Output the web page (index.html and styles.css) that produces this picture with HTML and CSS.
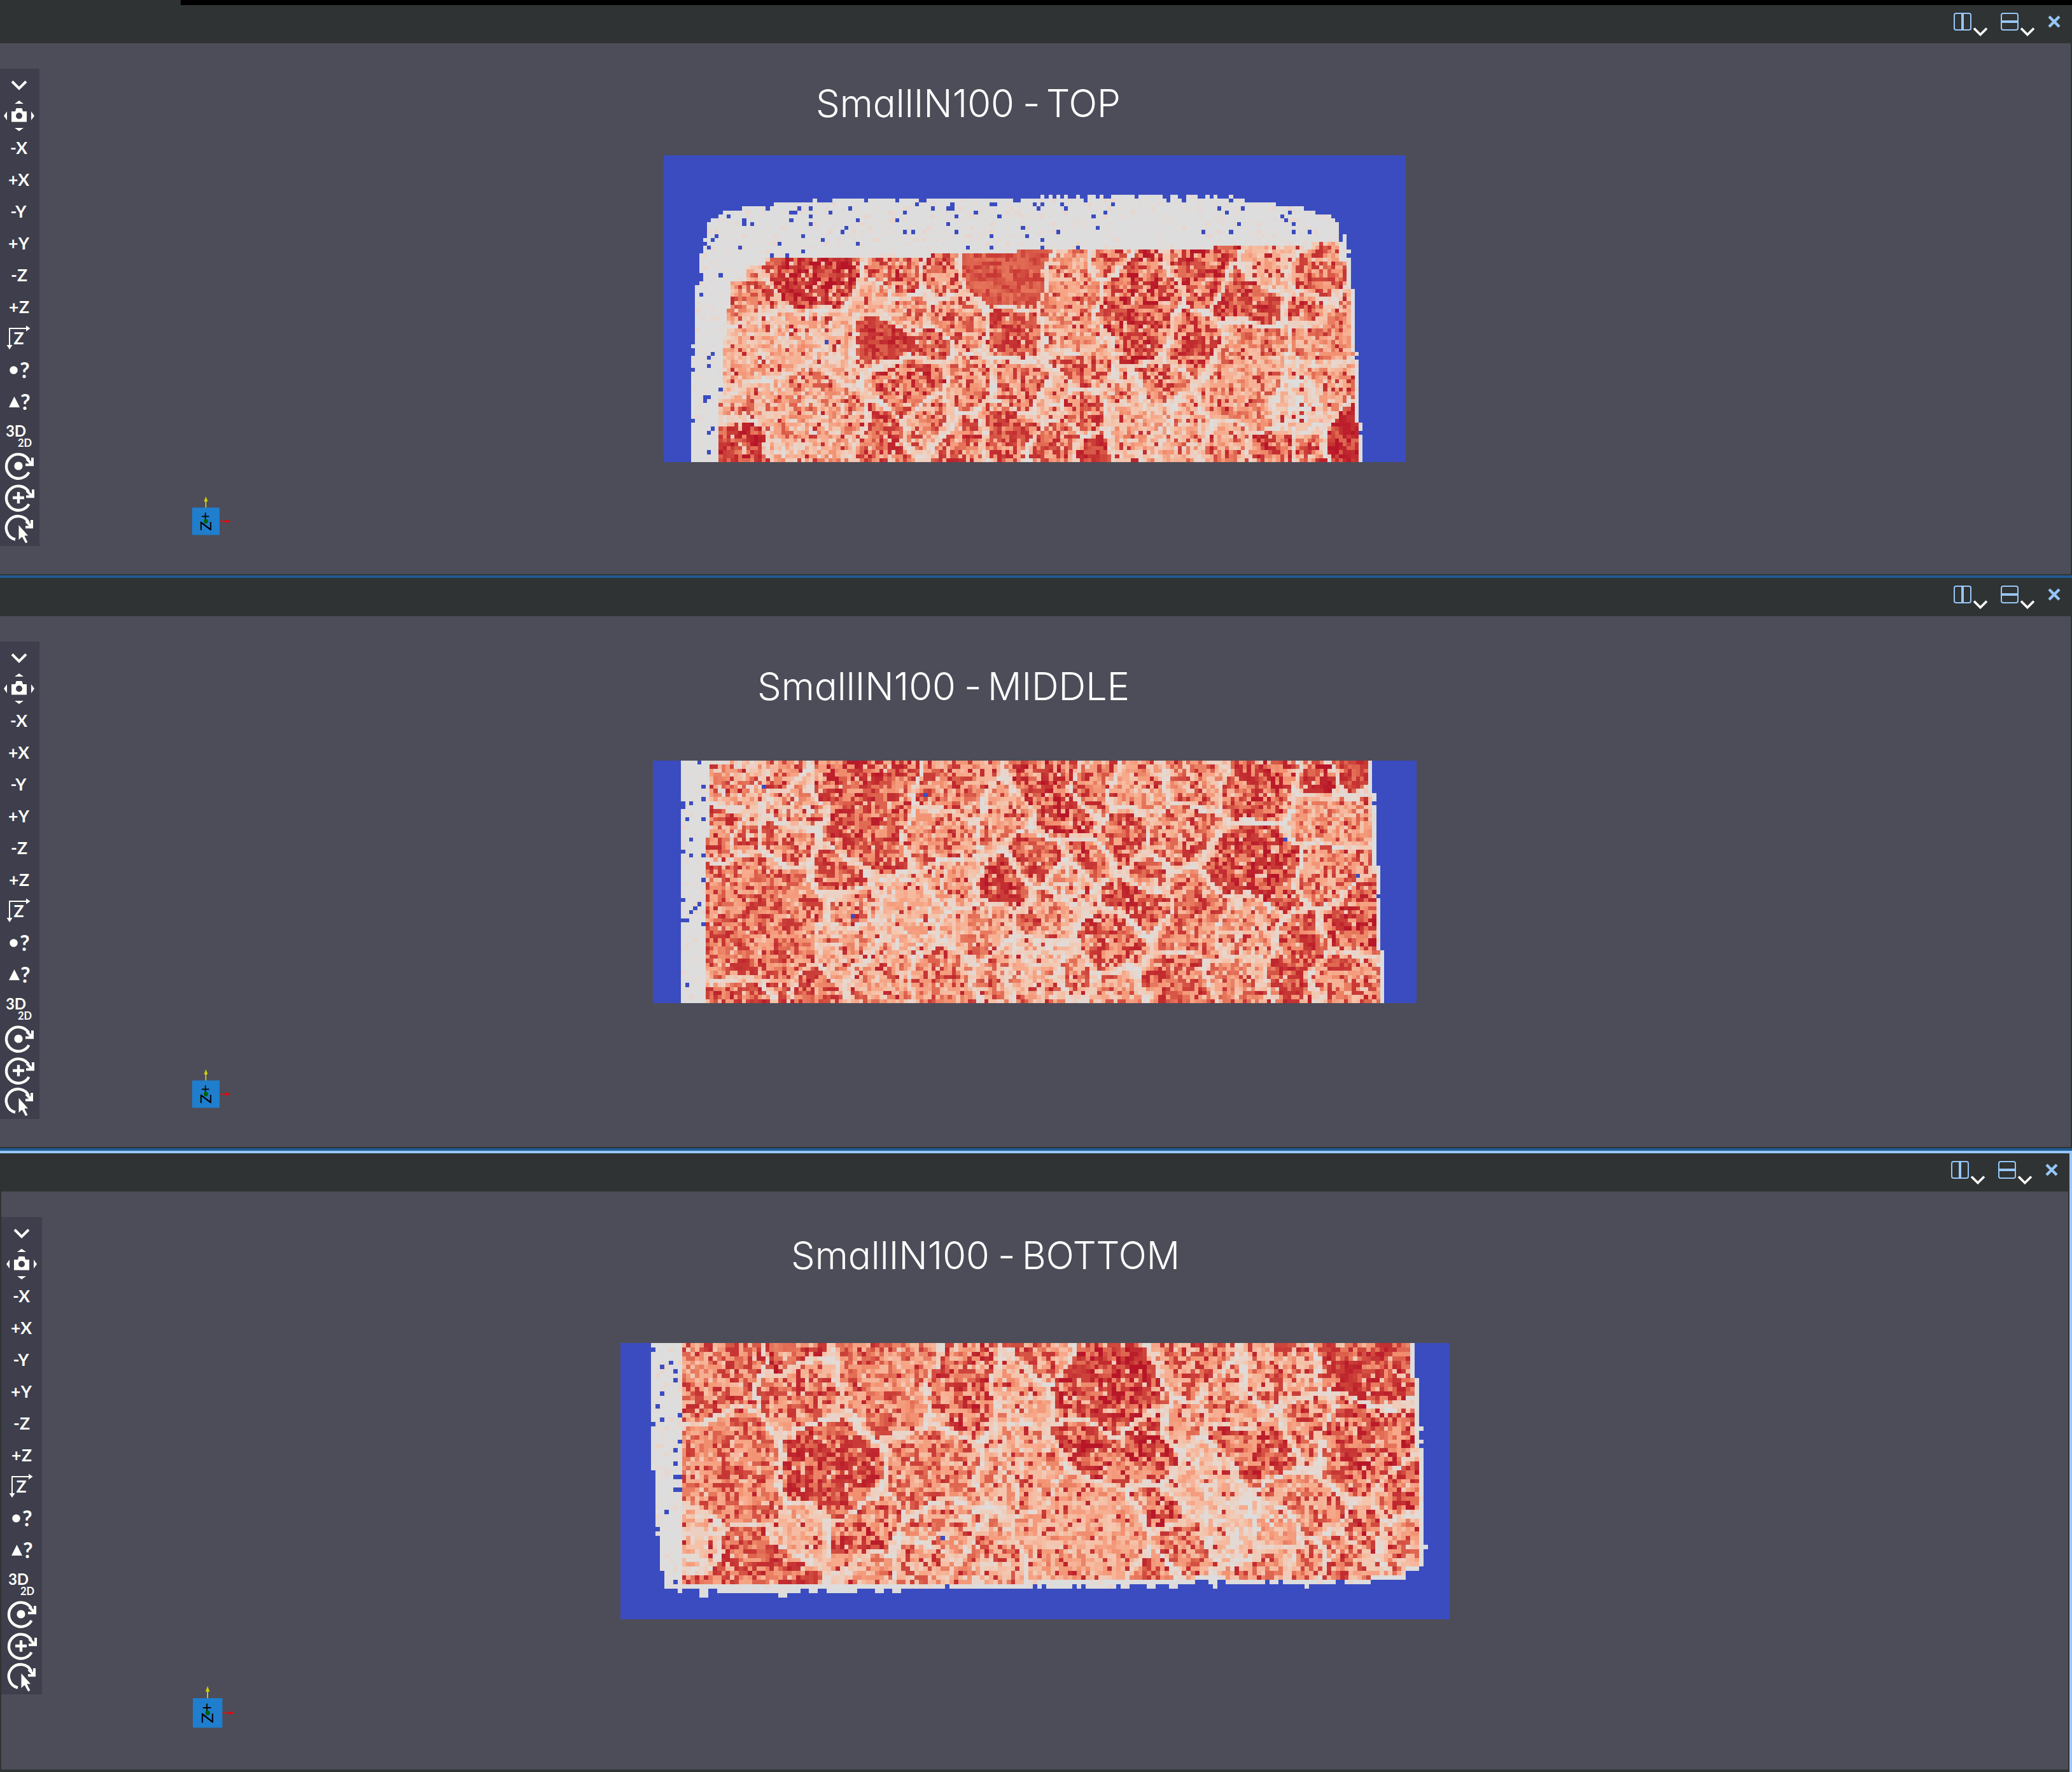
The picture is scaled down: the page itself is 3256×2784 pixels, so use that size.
FILE: index.html
```html
<!DOCTYPE html>
<html lang="en">
<head>
<meta charset="utf-8">
<title>SmallIN100</title>
<link rel="stylesheet" href="styles.css">
</head>
<body>
<svg class="defs" width="0" height="0">
  <defs>
    <g id="chev"><path d="M1 1 11 11 21 1" fill="none" stroke="#fffffa" stroke-width="3.6"/></g>
    <g id="tools" fill="#fffffa">
      <path d="M19 20 30 31 41 20" fill="none" stroke="#fffffa" stroke-width="4"/>
      <path d="M18 67h6l1.500-5h9l1.500 5h6v16.500H18z"/>
      <circle cx="30" cy="74" r="5" fill="#3e3e4c"/>
      <path d="M23 55h14l-7-5zM23 93h14l-7 5zM11 67v14l-5-7zM49 67v14l5-7z"/>
      <g class="tool-text">
        <text x="16" y="133.500" textLength="27">-X</text>
        <text x="13" y="183.500" textLength="33">+X</text>
        <text x="16.500" y="233.500" textLength="25">-Y</text>
        <text x="13" y="283.500" textLength="33">+Y</text>
        <text x="17" y="333.500" textLength="26">-Z</text>
        <text x="14" y="383.500" textLength="32">+Z</text>
        <text x="21.500" y="433">Z</text>
        <text x="31" y="486" class="q">?</text>
        <text x="32" y="536" class="q">?</text>
        <text x="9" y="578" class="d3" textLength="32">3D</text>
        <text x="28" y="594" class="d2" textLength="22">2D</text>
      </g>
      <path d="M14 407h27v-3.500l6.500 4.500-6.500 4.500v-3.500H16v25h3.500l-4.500 7-4.500-7H14z"/>
      <circle cx="21.500" cy="473.500" r="6.300"/>
      <path d="M22.500 515l8.500 17H14z"/>
      <g fill="none" stroke="#fffffa" stroke-width="4.400">
        <path d="M45.500 634a19 19 0 1 1-.500-19.500"/>
        <path d="M45.500 684a19 19 0 1 1-.500-19.500"/>
        <path d="M24 739.500a18.500 18.500 0 1 1 21-26"/>
        <path d="M40 622.200h11V611M41 672.200h11V661M40 720.200h10V709" stroke-width="4"/>
        <path d="M42 613l8 8M42 663l8 8M41 711l8 8" stroke-width="4"/>
        <path d="M29 665v18M20 674h18"/>
      </g>
      <circle cx="29" cy="624" r="6.600"/>
      <path d="M29 716v25l5.500-5 5.500 10 4-2-5-10h6z" stroke="#3e3e4c" stroke-width="1"/>
    </g>
    <g id="triad">
      <path d="M21.500 9v10" stroke="#ffff20" stroke-width="1.200"/>
      <path d="M21.500 1l3 8h-6z" fill="#d2d200"/>
      <rect x="0" y="18.500" width="43" height="43" fill="#1f7ecd"/>
      <text x="0" y="0" transform="translate(13 25) rotate(90)" textLength="30" lengthAdjust="spacingAndGlyphs">+Z</text>
      <circle cx="21.500" cy="40" r="3.400" fill="#006400"/>
      <path d="M43 40h10" stroke="#f00" stroke-width="1.200"/>
      <path d="M60.500 40l-8 2.800v-5.600z" fill="#e00"/>
    </g>
    <g id="split-v"><rect x="1" y="21" width="26" height="26" rx="3"/><path d="M14 21v26" stroke-width="4"/></g>
    <g id="split-h"><rect x="1" y="21" width="26" height="26" rx="3"/><path d="M1 34h26" stroke-width="4"/></g>
  </defs>
</svg>

<div class="top-strip"></div>

<section class="panel">
  <header class="bar">
    <svg class="split" viewBox="0 8 54 60"><use href="#split-v"/><use href="#chev" x="31" y="43.500"/></svg>
    <svg class="split" viewBox="0 8 54 60"><use href="#split-h"/><use href="#chev" x="31" y="43.500"/></svg>
    <svg class="close" viewBox="0 0 20 20"><path d="M2 2l16 16M18 2 2 18"/></svg>
  </header>
  <div class="view">
    <svg class="tools" viewBox="-2 0 64 750"><use href="#tools"/></svg>
    <div class="scene top">
      <svg class="title" width="474" height="62"><text y="53"><tspan x="-3" textLength="312" lengthAdjust="spacingAndGlyphs">SmallIN100</tspan> <tspan x="322">-</tspan> <tspan x="359" textLength="117" lengthAdjust="spacingAndGlyphs">TOP</tspan></text></svg>
      <canvas class="map" id="map-top" width="189" height="78"></canvas>
    </div>
    <svg class="triad" viewBox="0 0 62 62"><use href="#triad"/></svg>
  </div>
</section>

<section class="panel">
  <header class="bar">
    <svg class="split" viewBox="0 8 54 60"><use href="#split-v"/><use href="#chev" x="31" y="43.500"/></svg>
    <svg class="split" viewBox="0 8 54 60"><use href="#split-h"/><use href="#chev" x="31" y="43.500"/></svg>
    <svg class="close" viewBox="0 0 20 20"><path d="M2 2l16 16M18 2 2 18"/></svg>
  </header>
  <div class="view">
    <svg class="tools" viewBox="-2 0 64 750"><use href="#tools"/></svg>
    <div class="scene middle">
      <svg class="title" width="578" height="62"><text y="53"><tspan x="-3" textLength="312" lengthAdjust="spacingAndGlyphs">SmallIN100</tspan> <tspan x="322">-</tspan> <tspan x="359" textLength="223" lengthAdjust="spacingAndGlyphs">MIDDLE</tspan></text></svg>
      <canvas class="map" id="map-middle" width="189" height="60"></canvas>
    </div>
    <svg class="triad" viewBox="0 0 62 62"><use href="#triad"/></svg>
  </div>
</section>

<section class="panel active">
  <header class="bar">
    <svg class="split" viewBox="0 8 54 60"><use href="#split-v"/><use href="#chev" x="31" y="43.500"/></svg>
    <svg class="split" viewBox="0 8 54 60"><use href="#split-h"/><use href="#chev" x="31" y="43.500"/></svg>
    <svg class="close" viewBox="0 0 20 20"><path d="M2 2l16 16M18 2 2 18"/></svg>
  </header>
  <div class="view">
    <svg class="tools" viewBox="-2 0 64 750"><use href="#tools"/></svg>
    <div class="scene bottom">
      <svg class="title" width="604" height="62"><text y="53"><tspan x="-3" textLength="312" lengthAdjust="spacingAndGlyphs">SmallIN100</tspan> <tspan x="322">-</tspan> <tspan x="360" textLength="248" lengthAdjust="spacingAndGlyphs">BOTTOM</tspan></text></svg>
      <canvas class="map" id="map-bottom" width="189" height="63"></canvas>
    </div>
    <svg class="triad" viewBox="0 0 62 62"><use href="#triad"/></svg>
  </div>
</section>
<script src="maps.js"></script>
</body>
</html>
```
FILE: styles.css
```css
* { box-sizing: border-box; }
body {
  margin: 0;
  width: 3256px;
  height: 2784px;
  overflow: hidden;
  display: flex;
  flex-direction: column;
  background: #2f3333;
  font-family: Lato, "Open Sans", sans-serif;
}
.defs { position: absolute; }
.top-strip { flex: none; height: 8px; margin-left: 284px; background: #000; }
.panel {
  flex: none;
  display: flex;
  flex-direction: column;
  border-bottom: 4px solid #1f5b94;
}
.bar {
  height: 60px;
  display: flex;
  justify-content: flex-end;
  align-items: flex-start;
  gap: 20px;
  padding-right: 18px;
}
.split { width: 54px; height: 60px; fill: none; stroke: #97c7f9; stroke-width: 2; }
.close { width: 20px; height: 20px; margin-top: 16px; fill: none; stroke: #97c7f9; stroke-width: 4.4; }
.view {
  position: relative;
  height: 834px;
  margin: 0 2px 2px 0;
  display: flex;
  align-items: flex-start;
  background: #4d4d59;
}
.tools { flex: none; width: 64px; height: 750px; margin: 40px 0 0 -2px; background: #3e3e4c; }
.tool-text { font: 700 26.500px Lato, sans-serif; }
.tool-text .q { font-size: 34px; }
.tool-text .d3 { font-size: 24px; }
.tool-text .d2 { font-size: 16.500px; }
.scene { display: flex; flex-direction: column; align-items: flex-start; }
.title {
  display: block;
  overflow: visible;
  fill: #fff;
  font: 350 61px Inter, "Open Sans", sans-serif;
  font-feature-settings: "cv11";
}
.map { display: block; image-rendering: pixelated; }
.top .title { margin: 63px 0 0 1223px; }
.top .map { margin: 51px 0 0 981px; width: 1166px; height: 481.500px; }
.middle .title { margin: 79px 0 0 1131px; }
.middle .map { margin: 85.500px 0 0 964px; width: 1200px; height: 381px; }
.bottom .title { margin: 69px 0 0 1180px; }
.bottom .map { margin: 106.500px 0 0 908.500px; width: 1303.500px; height: 434.500px; }
.triad { position: absolute; left: 302px; top: 710.500px; width: 62px; height: 62px; font: 400 24px Lato, sans-serif; }
.active { flex: 1; border-top: 4px solid #97c7f9; border-right: 4px solid #97c7f9; border-bottom: 0; }
.active .view { flex: 1; margin: 0 2px 4px 2px; }
.active .tools { margin-left: 0; }
.active .triad { left: 301px; top: 776px; width: 67px; height: 67px; }
```
FILE: maps.js
```js
// Orientation slices: each is a grid of cells coloured on a cool-to-warm scale.
const STOPS = [
  [0.5, 221, 221, 221], [0.56, 233, 213, 203], [0.62, 244, 197, 173],
  [0.7, 247, 170, 140], [0.78, 242, 146, 114], [0.84, 226, 108, 84],
  [0.9, 205, 66, 58], [0.96, 192, 40, 46], [1, 184, 22, 40]
];
function warm(t) {
  t = Math.max(0.5, Math.min(1, t));
  let i = 1;
  while (t > STOPS[i][0]) i++;
  const a = STOPS[i - 1], b = STOPS[i], k = (t - a[0]) / (b[0] - a[0]);
  return [1, 2, 3].map(n => Math.round(a[n] + (b[n] - a[n]) * k));
}
function generator(seed) {
  return () => {
    seed = (seed + 0x6d2b79f5) | 0;
    let t = Math.imul(seed ^ (seed >>> 15), 1 | seed);
    t = (t + Math.imul(t ^ (t >>> 7), 61 | t)) ^ t;
    return ((t ^ (t >>> 14)) >>> 0) / 4294967296;
  };
}
// value of a step list [[from, value], ...] at position p
function step(list, p) {
  let v = list[0][1];
  for (const s of list) if (p >= s[0]) v = s[1];
  return v;
}

const MAPS = [
  {
    id: "map-top", seed: 11,
    left: [[0, 11], [21, 10], [25, 9], [33, 8], [48, 7]],
    right: [[0, 172], [20, 174], [24, 175], [34, 176], [50, 177], [68, 178]],
    top: [[0, 17], [12, 16], [14, 15], [15, 14], [20, 13], [28, 12], [43, 11], [148, 12], [156, 13], [163, 14], [166, 15], [170, 16], [171, 17], [172, 20], [173, 20], [174, 24], [175, 34], [176, 50], [177, 68]],
    bottom: [[0, 78]],
    innerLeft: [[0, 17], [39, 16], [45, 15], [60, 14]],
    innerTop: [[0, 32], [21, 28], [26, 26], [68, 25], [90, 24], [140, 23], [165, 22], [172, 27]],
    add: "38,11 96,10 98,10 100,10 102,10 105,10 108,10 109,10 111,10 114,10 115,10 116,10 117,10 118,10 119,10 121,10 122,10 123,10 124,10 125,10 126,10 129,10 130,10 133,10 134,10 135,10 138,10 140,10 144,10",
    holes: "16,15 20,16 20,17 22,17 26,13 32,14 33,14 34,13 37,13 37,15 37,17 32,16 42,14 47,13 49,16 46,18 45,19 35,20 40,21 29,22 35,24 19,23 27,25 31,25 49,22 51,11 59,11 65,11 66,11 61,14 59,16 64,12 68,13 72,13 73,13 73,12 61,19 63,19 74,15 72,17 74,19 79,14 83,12 84,12 85,15 89,11 90,11 91,18 92,20 83,20 83,23 77,23 94,12 95,13 13,20 12,21 10,22 11,23 14,30 9,30 9,31 9,35 12,50 11,51 11,53 7,49 7,50 7,54 14,59 10,61 11,61 10,62 7,67 12,69 11,70 11,75 41,47 96,12 101,12 102,13 114,12 112,14 109,15 110,18 100,19 96,21 96,23 105,23 107,11 128,11 132,11 141,13 143,14 144,11 147,13 146,17 137,19 144,19 157,15 158,16 159,14 160,17 160,19 164,19 174,25 176,51 177,70 172,20 172,21",
    // column, row, level, spread, size, and a shared id for grains built from several cells
    grains: [[31,28,.92,.2,.8,1],[41,30,.92,.2,1.1,1],[21,38,.8,.25],[30,48,.68,.22,1.1,2],[23,46,.69,.2,1,2],[42,47,.67,.2,1,2],[34,62,.73,.28,1.2,3],[44,69,.72,.28,1,3],[22,75,.92,.18,.7],[34,76,.68,.25,.9,3],[60,30,.86,.25],[70,31,.84,.25],[52,37,.73,.2,.8],[62,38,.76,.28],[85,29,.88,.08,1.45],[52,45,.92,.12,.8,4],[58,47,.92,.12,.9,4],[67,48,.9,.16,.8,4],[74,41,.81,.28],[89,45,.88,.16],[63,58,.86,.25,1.1],[89,58,.82,.26],[78,57,.8,.28],[56,72,.87,.2,1.1],[67,68,.8,.28],[87,69,.84,.24,1.1],[74,73,.82,.28],[103,34,.76,.24,1,5],[103,45,.74,.22,.9,5],[121,34,.88,.26,1.2,6],[121,44,.88,.26,1.2,6],[114,27,.86,.25,.7],[136,29,.88,.22],[135,47,.84,.28],[149,36,.9,.18],[164,31,.82,.24,.7],[163,38,.87,.24,.7],[154,27,.66,.16,.9],[168,47,.76,.2],[147,52,.77,.22,1.3,7],[149,61,.77,.22,1.2,7],[107,53,.8,.25],[118,59,.74,.28,.8],[124,57,.82,.28,.8],[107,64,.84,.25,.8],[98,62,.65,.2,.7],[100,73,.82,.25,.9],[108,76,.93,.12,.8],[121,70,.69,.24,1.2],[160,64,.6,.18],[170,58,.72,.25],[176,72,.94,.14,1.1],[155,75,.86,.28],[142,75,.8,.28,.9],[132,72,.73,.28],[165,74,.84,.26,.8]]
  },
  {
    id: "map-middle", seed: 29,
    left: [[0, 7]], right: [[0, 178], [8, 179], [26, 180], [47, 181]],
    top: [[0, 0]], bottom: [[0, 60]],
    innerLeft: [[0, 14], [19, 13]], innerTop: [[0, 0]],
    add: "",
    holes: "11,0 12,6 12,9 9,10 7,10 7,11 8,14 12,14 9,19 7,22 9,23 12,23 12,29 7,34 11,35 10,36 9,37 7,39 8,39 12,40 8,55 27,6 67,8 49,38 178,10 156,19 174,28 179,33",
    grains: [[51,7,.86,.24,1.4,1],[52,15,.86,.24,1.4,1],[22,6,.73,.3],[30,2,.8,.26,.8],[34,11,.72,.28],[17,17,.85,.24,.8],[32,19,.8,.3],[24,19,.77,.3,.7],[24,32,.83,.22,1.4,2],[24,44,.83,.22,1.4,2],[34,33,.83,.22,1,2],[45,27,.86,.22],[49,36,.75,.25,.8],[50,47,.72,.24],[62,38,.65,.2,1.1],[55,52,.74,.25],[71,18,.77,.28,1.1],[75,29,.71,.24],[75,6,.82,.28,1.1],[97,6,.87,.28,1.1,3],[100,12,.87,.28,1.1,3],[109,5,.85,.22,.9],[94,22,.87,.2,.9],[86,30,.92,.18,.9],[107,24,.86,.26,.8],[87,14,.76,.24],[80,42,.73,.25],[73,55,.79,.26,1.2],[97,38,.76,.28],[103,31,.7,.28,.8],[113,46,.84,.24],[121,35,.87,.2],[133,38,.83,.22,1.3],[131,17,.8,.25,1.2],[120,7,.71,.22],[133,5,.75,.25],[116,19,.85,.22,.9],[122,27,.83,.22,.7],[143,25,.91,.2,1.1,4],[152,26,.91,.2,1.1,4],[149,5,.86,.27,1.1],[165,5,.91,.2,.7],[172,1,.9,.12,.8],[166,14,.76,.24,1.1],[167,27,.8,.25],[160,48,.88,.18,1.1],[174,38,.88,.24,1.1],[146,42,.73,.28],[130,56,.85,.22,1.1],[113,56,.76,.27],[94,54,.72,.28],[84,53,.77,.27,.9],[169,52,.8,.26,.9],[20,58,.87,.2,.8],[41,57,.85,.2,.7],[143,54,.76,.26],[96,47,.65,.25,.8],[104,53,.75,.28,.8]]
  },
  {
    id: "map-bottom", seed: 47,
    left: [[0, 7], [29, 8], [44, 9], [52, 10]],
    right: [[0, 181], [8, 182], [24, 183], [51, 182]],
    top: [[0, 0]],
    bottom: [[0, 56], [95, 55], [131, 54], [138, 55], [171, 54], [179, 52]],
    innerLeft: [[0, 14]], innerTop: [[0, 0]],
    add: "13,56 18,56 19,56 18,57 19,57 36,57 37,57 43,56 44,56 58,56 59,56 62,56 63,56 95,55 97,55 98,55 99,55 100,55 101,55 102,55 104,55 106,55 107,55 108,55 109,55 110,55 111,55 112,55 114,55 115,55 120,55 121,55 125,55 126,55 134,54 135,54 135,55 156,55 182,19 182,22 183,46 " + [...Array(19)].map((_, i) => `${22 + i},56`).join(" ") + " " + [...Array(7)].map((_, i) => `${47 + i},56`).join(" "),
    holes: "7,1 11,4 9,5 12,6 12,8 9,11 8,14 13,16 9,17 7,18 13,22 12,24 12,27 12,30 13,30 12,33 13,33 10,38 8,42 12,54 73,44 74,55 94,55 147,54 150,54 163,54 164,54",
    grains: [[21,7,.82,.25,1.4],[39,1,.91,.18,.9],[40,11,.8,.28,1.1],[24,24,.82,.2,1.2,1],[26,34,.82,.2,1.2,1],[46,25,.89,.18,1.2,2],[48,32,.89,.18,1.1,2],[62,8,.8,.2,1.4],[77,11,.84,.28,1.2],[73,29,.78,.25,1.3],[30,51,.86,.22,1.4],[56,43,.84,.28,1.1],[19,44,.65,.2,.8],[40,43,.68,.2,.8],[68,50,.76,.28],[57,53,.73,.25,.8],[73,42,.73,.26],[90,12,.71,.24],[90,28,.72,.26,1.2],[96,2,.79,.26,.8],[107,9,.92,.2,1.2,3],[114,12,.92,.2,1.2,3],[107,24,.88,.24,1,4],[119,23,.88,.24,1.1,4],[102,42,.72,.18,1.4,5],[109,44,.72,.18,1.3,5],[82,50,.74,.28,1.1],[122,38,.86,.26,.8],[128,45,.82,.24,.9],[141,24,.87,.22,1,6],[147,24,.87,.22,1,6],[130,5,.82,.28],[138,12,.76,.26],[150,7,.77,.28,1.1],[168,5,.89,.18,1.2],[166,19,.87,.25,1.2,7],[169,26,.87,.25,1.1,7],[156,18,.8,.28],[133,31,.66,.18,1.1],[128,18,.75,.24,.8],[139,42,.6,.18,.9],[155,36,.79,.24],[178,34,.87,.24],[170,42,.86,.28,.8],[166,50,.79,.28],[178,46,.74,.25],[121,54,.86,.22,.8],[146,51,.77,.26],[149,43,.67,.28,.8],[156,51,.79,.24,.8]]
  }
];

function draw(map) {
  const canvas = document.getElementById(map.id);
  const w = canvas.width, h = canvas.height;
  const ctx = canvas.getContext("2d");
  const img = ctx.createImageData(w, h);
  const rand = generator(map.seed);
  const holes = new Set(map.holes.split(" "));
  const add = new Set(map.add.split(" "));
  const grains = map.grains.map((g, i) => ({ x: g[0], y: g[1], level: g[2], spread: g[3], size: g[4] || 1, id: g[5] || 100 + i }));
  const above = new Float32Array(w);
  let n = 0.5;
  for (let y = 0; y < h; y++) {
    for (let x = 0; x < w; x++) {
      // a cell sometimes repeats its left or upper neighbour, so values form small clusters
      const fresh = rand(), pick = rand(), m = rand(), key = x + "," + y;
      n = pick < 0.16 ? n : pick < 0.32 ? above[x] : fresh;
      above[x] = n;
      const right = step(map.right, y);
      let inside = x >= step(map.left, y) && x < right && y >= step(map.top, x) && y < step(map.bottom, x);
      if (add.has(key)) inside = true;
      if (holes.has(key)) inside = false;
      let c = [59, 76, 192];
      if (inside) {
        const shell = x < step(map.innerLeft, y) || y < step(map.innerTop, x) || x >= right - 1 || (map.id === "map-bottom" && y >= step(map.bottom, x) - 1);
        let t;
        if (shell) {
          t = fresh > 0.96 ? 0.56 : fresh > 0.8 ? 0.52 : 0.5;
        } else {
          const wx = x + 0.8 * Math.sin(y * 0.55 + map.seed) + 0.8 * Math.sin(y * 0.23 + x * 0.17);
          const wy = y + 0.8 * Math.sin(x * 0.41 + map.seed) + 0.8 * Math.sin(x * 0.19 - y * 0.2);
          const near = grains
            .map(q => ({ q, d: Math.hypot(wx - q.x, wy - q.y) / q.size }))
            .sort((a, b) => a.d - b.d);
          const g = near[0].q;
          const gap = (near.find(e => e.q.id !== g.id).d - near[0].d) * g.size;
          if (gap < 1.15) t = 0.5 + n * 0.13;
          else if (gap < 2.1 && m < 0.4) t = 0.54 + n * 0.2;
          else {
            t = g.level + (n - 0.55) * g.spread * 1.25;
            if (g.spread > 0.15 && m > 0.93) t = 0.91 + fresh * 0.07;
            else if (g.spread > 0.15 && m < 0.09) t = 0.58 + fresh * 0.1;
          }
        }
        c = warm(t);
      }
      const i = (y * w + x) * 4;
      img.data[i] = c[0];
      img.data[i + 1] = c[1];
      img.data[i + 2] = c[2];
      img.data[i + 3] = 255;
    }
  }
  ctx.putImageData(img, 0, 0);
}
MAPS.forEach(draw);
```
